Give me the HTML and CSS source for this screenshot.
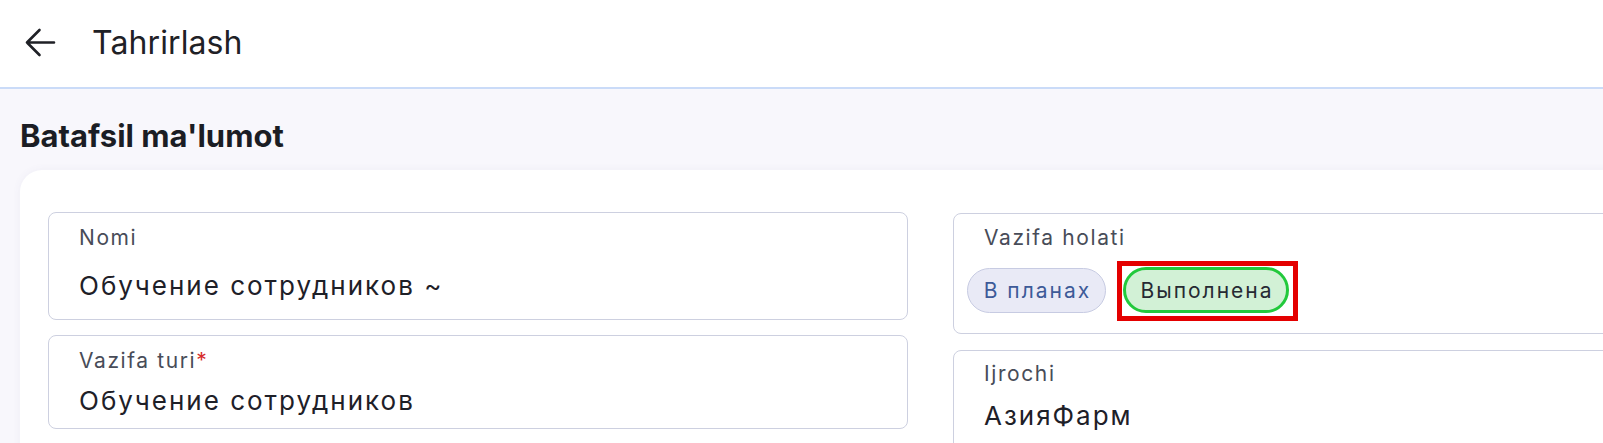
FILE: index.html
```html
<!DOCTYPE html>
<html lang="uz">
<head>
<meta charset="utf-8">
<title>Tahrirlash</title>
<link rel="stylesheet" href="styles.css">
</head>
<body>
<header class="topbar">
  <svg class="back" width="32" height="30" viewBox="0 0 32 30" aria-hidden="true">
    <path d="M30 14.5H3M15.5 2L3 14.5L15.5 27" fill="none" stroke="#1f2126" stroke-width="2.6" stroke-linecap="round" stroke-linejoin="round"/>
  </svg>
  <h1 class="title">Tahrirlash</h1>
</header>
<main class="page">
  <h2 class="section-title">Batafsil ma'lumot</h2>
  <section class="card">
    <div class="col">
      <div class="field field-name">
        <div class="label">Nomi</div>
        <div class="value">Обучение сотрудников ~</div>
      </div>
      <div class="field field-type">
        <div class="label">Vazifa turi<span class="req">*</span></div>
        <div class="value">Обучение сотрудников</div>
      </div>
    </div>
    <div class="col col-right">
      <div class="field field-status">
        <div class="label">Vazifa holati</div>
        <div class="chips">
          <span class="chip chip-plan">В планах</span>
          <span class="chip chip-done">Выполнена<span class="mark"></span></span>
        </div>
      </div>
      <div class="field field-exec">
        <div class="label">Ijrochi</div>
        <div class="value">АзияФарм</div>
      </div>
    </div>
  </section>
</main>
</body>
</html>
```

FILE: styles.css
```css
* { box-sizing: border-box; }
html, body {
  margin: 0;
  padding: 0;
  overflow: hidden;
}
body {
  width: 1603px;
  height: 443px;
  font-family: Inter, "Noto Sans", "Liberation Sans", sans-serif;
  color: #1f2129;
  background: #f8f7fc;
}
.topbar {
  height: 89px;
  background: #ffffff;
  border-bottom: 2px solid #cadbf8;
  display: flex;
  align-items: center;
  padding-left: 24px;
  gap: 36px;
}
.back { display: block; margin-top: -2px; }
.title {
  margin: 0;
  font-size: 32px;
  font-weight: 400;
  color: #1f2126;
  letter-spacing: 0.1px;
  margin-top: -3px;
}
.page {
  padding: 0 0 0 20px;
}
.section-title {
  margin: 0;
  padding-top: 28px;
  height: 81px;
  font-size: 31px;
  line-height: 38px;
  font-weight: 700;
  color: #1b1d24;
  letter-spacing: 0;
}
.card {
  width: 1900px;
  background: #ffffff;
  border-radius: 22px;
  box-shadow: 0 0 8px rgba(80, 80, 140, 0.06);
  padding: 42px 28px 0 28px;
  display: flex;
  gap: 45px;
  height: 400px;
}
.col {
  width: 860px;
  display: flex;
  flex-direction: column;
  gap: 15px;
  flex: none;
}
.col-right { gap: 16px; padding-top: 1px; }
.field {
  border: 1.5px solid #cdd0e0;
  border-radius: 8px;
  padding: 0 30px;
  display: flex;
  flex-direction: column;
}
.label {
  font-size: 21px;
  line-height: 24px;
  color: #484c58;
  letter-spacing: 1.6px;
}
.req { color: #d62b2b; letter-spacing: 0; }
.value {
  font-size: 26px;
  line-height: 32px;
  color: #1e2028;
  letter-spacing: 2px;
}
.field-name { height: 108px; padding-top: 13px; gap: 20px; }
.field-type { height: 94px; padding-top: 13px; gap: 12px; }
.field-status { height: 121px; padding-top: 12px; gap: 17px; padding-left: 13px; }
.field-status .label { padding-left: 17px; }
.field-exec { height: 120px; padding-top: 11px; gap: 14px; }
.chips {
  display: flex;
  gap: 17px;
  align-items: center;
}
.chip {
  position: relative;
  display: inline-flex;
  align-items: center;
  justify-content: center;
  height: 46px;
  border-radius: 23px;
  font-size: 21px;
  letter-spacing: 2px;
  padding-left: 2px;
}
.chip-plan {
  width: 139px;
  height: 45px;
  background: #e9eaf6;
  border: 1.5px solid #c7cbe2;
  color: #3d5a98;
}
.chip-done {
  width: 166px;
  background: #d2f1d6;
  border: 3px solid #22c93c;
  color: #262a33;
}
.mark {
  position: absolute;
  left: -9px;
  top: -9px;
  right: -12px;
  bottom: -11px;
  border: 5px solid #e40000;
  border-radius: 0;
  pointer-events: none;
}
```
